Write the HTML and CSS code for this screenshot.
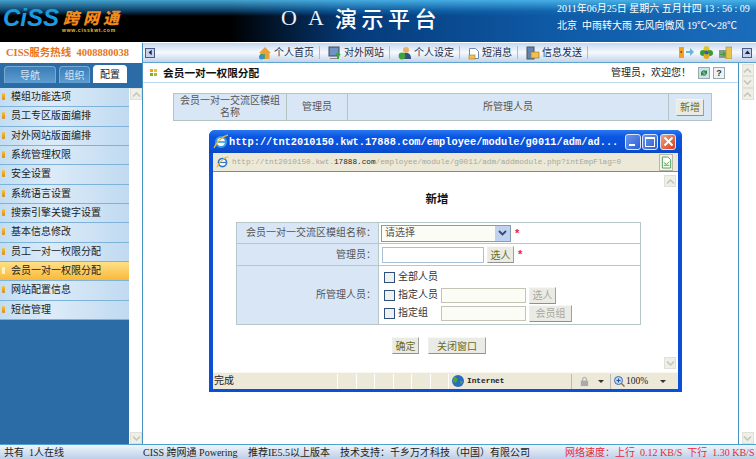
FILE: index.html
```html
<!DOCTYPE html>
<html lang="zh">
<head>
<meta charset="utf-8">
<title>OA 演示平台</title>
<link rel="stylesheet" href="styles.css">
</head>
<body>
<div class="page">
  <header class="top">
    <div class="logo">
      <div class="logo-main"><span class="ciss">CiSS</span><span class="kwt">跨网通</span></div>
      <div class="logo-url">www.cisskwt.com</div>
    </div>
    <div class="oa"><span class="oa-l">O</span><span class="oa-l">A</span><span class="oa-t">演示平台</span></div>
    <div class="info">
      <div>2011年06月25日 星期六 五月廿四 13 : 56 : 09</div>
      <div>北京&nbsp; 中雨转大雨 无风向微风 19℃～28℃</div>
    </div>
  </header>
  <div class="body">
    <aside class="side">
      <div class="hotline">CISS服务热线&nbsp; 4008880038</div>
      <div class="tabs">
        <span class="tab t1">导航</span><span class="tab t2">组织</span><span class="tab on">配置</span>
      </div>
      <div class="side-body">
        <ul class="menu">
          <li>模组功能选项</li>
          <li>员工专区版面编排</li>
          <li>对外网站版面编排</li>
          <li>系统管理权限</li>
          <li>安全设置</li>
          <li>系统语言设置</li>
          <li>搜索引擎关键字设置</li>
          <li>基本信息修改</li>
          <li>员工一对一权限分配</li>
          <li class="active">会员一对一权限分配</li>
          <li>网站配置信息</li>
          <li>短信管理</li>
        </ul>
        <div class="sb side-sb"><span class="sb-btn"><svg viewBox="0 0 9 5" width="9" height="5"><path d="M1 4.500 4.500 1 8 4.500" fill="none" stroke="#c4c4b8" stroke-width="1.500"/></svg></span><span class="sb-btn"><svg viewBox="0 0 9 5" width="9" height="5"><path d="M1 .5 4.500 4 8 .5" fill="none" stroke="#c4c4b8" stroke-width="1.500"/></svg></span></div>
      </div>
    </aside>
    <main class="main">
      <nav class="toolbar">
        <span class="mini"><svg viewBox="0 0 9 9" width="7" height="7"><path d="M6 1 2 4.500 6 8z" fill="#223"/></svg></span>
        <a class="tool first"><svg viewBox="0 0 14 14" width="14" height="14"><path d="M1 7 7 1l6 6-1.500 0v6h-9V7z" fill="#e9a23b"/><path d="M2 13V8h5v5z" fill="#5aa34a"/><circle cx="3.500" cy="11" r="2.500" fill="#3b8ed0"/></svg>个人首页</a>
        <a class="tool"><svg viewBox="0 0 14 14" width="14" height="14"><rect x="1" y="1" width="10" height="9" fill="#6f93c4" stroke="#445"/><path d="M2 12h9v1H2z" fill="#889"/><path d="M10 6l3 3h-2v4H9V9H7z" fill="#3da53a"/></svg>对外网站</a>
        <a class="tool"><svg viewBox="0 0 14 14" width="14" height="14"><circle cx="8" cy="4" r="3" fill="#e8b06a"/><path d="M3 13c0-5 2-6 5-6s5 1 5 6z" fill="#35507f"/><circle cx="4" cy="10" r="3.400" fill="#3da53a"/></svg>个人设定</a>
        <a class="tool"><svg viewBox="0 0 12 14" width="12" height="14"><path d="M1.500 2.500h6l3 3v7h-9z" fill="#fff" stroke="#6b8bb5"/><rect x="1" y="9" width="6" height="4" fill="#f0c050" stroke="#a77b1c" stroke-width=".6"/></svg>短消息</a>
        <a class="tool"><svg viewBox="0 0 14 14" width="14" height="14"><rect x="1" y="1" width="7" height="12" fill="#5f85b8" stroke="#456"/><rect x="5" y="6" width="8" height="6" fill="#f0c050" stroke="#a77b1c" stroke-width=".7"/></svg>信息发送</a>
        <span class="tool-right">
          <svg viewBox="0 0 15 13" width="15" height="13"><rect x="0" y="1" width="5" height="11" fill="#f2a21e"/><rect x="1.500" y="5" width="1.500" height="2" fill="#c22"/><path d="M7 5h4V2l4 4-4 4V7H7z" fill="#67b6d8"/></svg>
          <svg viewBox="0 0 13 13" width="13" height="13"><circle cx="6.500" cy="3" r="3" fill="#e8c31c"/><circle cx="3" cy="7" r="3" fill="#3c9b2f"/><circle cx="10" cy="7" r="3" fill="#3c9b2f"/><circle cx="6.500" cy="10" r="3" fill="#e8a81c"/><circle cx="6.500" cy="6.500" r="2" fill="#2a64b8"/></svg>
          <svg viewBox="0 0 13 13" width="13" height="13"><rect x="7" y="1" width="6" height="12" fill="#e8c54a" stroke="#8a7a30" stroke-width=".5"/><rect x="0" y="4" width="7" height="8" fill="#8a9a8a"/><path d="M1 8h3V5l3 3-3 3V9H1z" fill="#3da53a"/></svg>
          <span class="mini r"><svg viewBox="0 0 9 9" width="7" height="7"><path d="M1 6.500 4.500 2 8 6.500z" fill="#223"/></svg></span>
        </span>
      </nav>
      <div class="content-row">
        <section class="content">
          <div class="title-bar">
            <span class="squares"><i class="s1"></i><i class="s2"></i><i class="s3"></i><i class="s4"></i></span>
            <h1>会员一对一权限分配</h1>
            <span class="welcome">管理员，欢迎您！</span>
            <span class="hbtn green"><svg viewBox="0 0 10 10" width="10" height="10"><path d="M2 5a3 3 0 0 1 5-2l1-1v3.500H4.500L6 4a2 2 0 0 0-3 1zM8 5a3 3 0 0 1-5 2L2 8V4.500h3.500L4 6a2 2 0 0 0 3-1z" fill="#2a8a30"/></svg></span>
            <span class="hbtn">?</span>
          </div>
          <table class="list">
            <tr>
              <td class="c1">会员一对一交流区模组名称</td>
              <td class="c2">管理员</td>
              <td class="c3">所管理人员</td>
              <td class="c4"><button class="btn">新增</button></td>
            </tr>
          </table>
        </section>
        <div class="sb main-sb">
          <span class="sb-btn"><svg viewBox="0 0 9 5" width="9" height="5"><path d="M1 4.500 4.500 1 8 4.500" fill="none" stroke="#c4c4b8" stroke-width="1.500"/></svg></span><span class="sb-btn"><svg viewBox="0 0 9 5" width="9" height="5"><path d="M1 .5 4.500 4 8 .5" fill="none" stroke="#c4c4b8" stroke-width="1.500"/></svg></span><span class="sb-btn"><svg viewBox="0 0 9 5" width="9" height="5"><path d="M1 4.500 4.500 1 8 4.500" fill="none" stroke="#c4c4b8" stroke-width="1.500"/></svg></span>
          <span class="sb-btn end"><svg viewBox="0 0 9 5" width="9" height="5"><path d="M1 .5 4.500 4 8 .5" fill="none" stroke="#c4c4b8" stroke-width="1.500"/></svg></span>
        </div>
      </div>
    </main>
  </div>
  <footer class="foot">
    <span class="f1">共有&nbsp; 1人在线</span>
    <span class="f2">CISS 跨网通 Powering</span>
    <span class="f3">推荐IE5.5以上版本</span>
    <span class="f4">技术支持：千乡万才科技（中国）有限公司</span>
    <span class="f5">网络速度：上行&nbsp; 0.12 KB/S&nbsp; 下行&nbsp; 1.30 KB/S</span>
  </footer>

  <div class="win">
    <div class="win-title">
      <svg class="ie" viewBox="0 0 16 16" width="16" height="16"><circle cx="8" cy="8" r="5" fill="#fff" stroke="#3a9ae0" stroke-width="2.200"/><path d="M3 8h10" stroke="#3a9ae0" stroke-width="1.600"/><path d="M1 14C3 9 9 2 15 1" fill="none" stroke="#f0b428" stroke-width="1.300"/></svg>
      <span class="win-url">http://tnt2010150.kwt.17888.com/employee/module/g0011/adm/ad...</span>
      <span class="wb min"><i></i></span><span class="wb max"><i></i></span><span class="wb close"><svg viewBox="0 0 11 11" width="11" height="11"><path d="M1.500 1.500l8 8M9.500 1.500l-8 8" stroke="#fff" stroke-width="2"/></svg></span>
    </div>
    <div class="addr">
      <span class="addr-box">
        <svg viewBox="0 0 16 16" width="13" height="13"><circle cx="8" cy="8" r="5" fill="#fff" stroke="#2a7ad0" stroke-width="2"/><path d="M3 8h10" stroke="#2a7ad0" stroke-width="1.500"/><path d="M1 14C3 9 9 2 15 1" fill="none" stroke="#f0b428" stroke-width="1.300"/></svg>
        <span class="addr-url">http://tnt2010150.kwt.<b>17888.com</b>/employee/module/g0011/adm/addmodule.php?intEmpFlag=0</span>
      </span>
      <span class="addr-go"><svg viewBox="0 0 12 14" width="11" height="13"><path d="M1.500 1h6l3 3v9h-9z" fill="#fff" stroke="#4a9a50"/><path d="M3 7l3 2 3-3M3 10h6" stroke="#3da53a" fill="none"/></svg></span>
    </div>
    <div class="win-body">
      <form class="form-wrap">
        <h2>新增</h2>
        <table class="form">
          <tr class="r1">
            <th>会员一对一交流区模组名称：</th>
            <td><span class="select"><span>请选择</span><i class="arrow"><svg viewBox="0 0 9 6" width="9" height="6"><path d="M1 1l3.500 3.500L8 1" fill="none" stroke="#2c4a85" stroke-width="1.800"/></svg></i></span><em>*</em></td>
          </tr>
          <tr class="r2">
            <th>管理员：</th>
            <td><span class="input wide"></span><button type="button" class="btn small">选人</button><em>*</em></td>
          </tr>
          <tr class="r3">
            <th>所管理人员：</th>
            <td>
              <div class="opt"><i class="cb"></i><span class="lbl">全部人员</span></div>
              <div class="opt"><i class="cb"></i><span class="lbl">指定人员</span><span class="input"></span><button type="button" class="btn small off">选人</button></div>
              <div class="opt"><i class="cb"></i><span class="lbl">指定组</span><span class="input"></span><button type="button" class="btn off grp">会员组</button></div>
            </td>
          </tr>
        </table>
        <div class="actions"><button type="button" class="btn">确定</button><button type="button" class="btn close-w">关闭窗口</button></div>
      </form>
      <div class="sb win-sb"><span class="sb-btn"><svg viewBox="0 0 9 5" width="9" height="5"><path d="M1 4.500 4.500 1 8 4.500" fill="none" stroke="#c4c4b8" stroke-width="1.500"/></svg></span><span class="sb-btn"><svg viewBox="0 0 9 5" width="9" height="5"><path d="M1 .5 4.500 4 8 .5" fill="none" stroke="#c4c4b8" stroke-width="1.500"/></svg></span></div>
    </div>
    <div class="win-status">
      <span class="st-done">完成</span>
      <span class="cell"></span><span class="cell"></span><span class="cell"></span><span class="cell"></span><span class="cell"></span><span class="cell"></span>
      <span class="st-net"><svg viewBox="0 0 12 12" width="12" height="12"><circle cx="6" cy="6" r="6" fill="#2a6cc0"/><path d="M2 2c3 0 4 2 3 4S2 8 1 6zM8 6l3 0-2 4z" fill="#4aa83a"/></svg>Internet</span>
      <span class="st-lock"><svg viewBox="0 0 12 12" width="11" height="11"><rect x="2" y="5" width="8" height="6" fill="#aaa"/><path d="M4 5V3c0-2 4-2 4 0v2" fill="none" stroke="#999"/></svg><i class="caret"></i></span>
      <span class="st-zoom"><svg viewBox="0 0 11 11" width="11" height="11"><circle cx="4.500" cy="4.500" r="4" fill="#bcd6f2" stroke="#3a6cb0"/><path d="M2.500 4.500h4M4.500 2.500v4" stroke="#2050a0"/><path d="M7.500 7.500l3 3" stroke="#a07030" stroke-width="1.500"/></svg>100%<i class="caret"></i></span>
    </div>
  </div>
</div>
</body>
</html>
```
FILE: styles.css
```css
* { box-sizing: border-box; }
html, body { margin: 0; padding: 0; background: #fff; }
body { font: 10px/1.2 "Liberation Serif", "Noto Sans CJK SC", serif; color: #222; }
.page { position: relative; width: 756px; height: 459px; overflow: hidden; display: flex; flex-direction: column; }

/* header */
.top { height: 42px; flex: none; display: flex; align-items: flex-start; color: #fff;
  background: linear-gradient(180deg, rgba(80,190,240,.85) 0, rgba(20,110,180,.55) 11px, rgba(0,0,0,0) 16px), linear-gradient(90deg, #000 0, #000 230px, #053a78 350px, #0f5ba8 560px, #1a6dbb 756px); }
.logo { width: 281px; flex: none; padding: 9px 0 0 3px; }
.logo-main { display: flex; align-items: flex-start; height: 18px; }
.ciss { font: italic 700 24px/18px "Liberation Sans", sans-serif; color: #1c9be0; width: 60px; flex: none; }
.kwt { font: italic 900 16px/16px "Noto Sans CJK SC", sans-serif; color: #f08a1c; letter-spacing: 4px; white-space: nowrap; }
.logo-url { font: 700 5px/6px "Liberation Sans", sans-serif; color: #e0c030; margin-left: 59px; letter-spacing: .75px; white-space: nowrap; }
.oa { width: 276px; flex: none; display: flex; align-items: center; height: 35px; }
.oa-l { font: 22px/35px "Liberation Serif", serif; width: 27px; color: #e8f2fa; flex: none; }
.oa-t { font: 500 22px/35px "Noto Sans CJK SC", sans-serif; letter-spacing: 4.500px; white-space: nowrap; }
.info { font-size: 10px; line-height: 17px; white-space: nowrap; }

/* layout */
.body { flex: 1; display: flex; border-top: 1px solid #fff; min-height: 0; }
.side { width: 142px; flex: none; display: flex; flex-direction: column; }
.hotline { height: 20px; line-height: 19px; padding-left: 6px; color: #e8741c; font-weight: 700; font-size: 10.500px; white-space: nowrap; }
.tabs { height: 21px; background: #2b6ca6; display: flex; align-items: flex-end; padding: 0 0 1px 4px; flex: none; }
.tab { height: 17px; text-align: center; line-height: 17px; color: #d4e6f5; background: linear-gradient(#3b7db8, #5e9dd0); border: 1px solid #7aaad2; border-bottom: 0; border-radius: 4px 4px 0 0; flex: none; }
.t1 { width: 52px; margin-right: 3px; }
.t2 { width: 31px; margin-right: 3px; }
.tab.on { width: 34px; height: 18px; background: #fff; color: #222; border-color: #fff; }
.side-body { flex: 1; display: flex; background: #2b6ca6; padding-top: 4px; min-height: 0; }
.menu { list-style: none; margin: 0; padding: 0; width: 129px; flex: none; }
.menu li { height: 19.33px; line-height: 18px; padding-left: 11px; color: #222; white-space: nowrap; position: relative;
  background: linear-gradient(90deg, #c2ddf3, #dcebf8 40%, #c0daf0); border-bottom: 1px solid #7fb2d8; }
.menu li::before { content: ""; position: absolute; left: 2px; top: 5px; width: 3px; height: 7px; background: linear-gradient(#f7c53a, #e08a10); border-radius: 1px; }
.menu li.active { background: linear-gradient(#fde08a, #fbb836); }
.menu li.active::before { background: #fff3c0; }

/* scrollbars */
.sb { background: #fff; display: flex; flex-direction: column; align-items: center; flex: none; }
.sb-btn { width: 12px; height: 12px; background: #eef0e8; border: 1px solid #dfe0d8; display: flex; align-items: center; justify-content: center; flex: none; }
.side-sb { width: 13px; padding-left: 1px; justify-content: space-between; }
.main-sb { width: 17px; padding-top: 1px; }
.sb-btn.end { margin-top: auto; }

/* main */
.main { flex: 1; min-width: 0; display: flex; flex-direction: column; border-left: 1px solid #4591c2; }
.toolbar { height: 20px; flex: none; display: flex; align-items: center; padding-left: 2px; white-space: nowrap; border-bottom: 1px solid #5fa3cf;
  background: linear-gradient(#c6d8ef, #f6f9fd 50%, #c2d4ea); color: #1c2c44; }
.mini { width: 10px; height: 10px; border: 1px solid #4a5a8a; background: #c5d3ea; display: flex; align-items: center; justify-content: center; flex: none; }
.tool { display: flex; align-items: center; gap: 2px; padding: 0 5px 0 8px; border-right: 1px solid #a4bfdc; height: 13px; flex: none; }
.tool.first { margin-left: 103px; padding-left: 0; }
.tool svg { flex: none; }
.tool-right { margin-left: auto; display: flex; align-items: center; gap: 6px; padding-right: 4px; }
.mini.r { margin-left: 4px; }
.content-row { flex: 1; display: flex; min-height: 0; }
.content { flex: 1; min-width: 0; border-right: 1px solid #4591c2; }
.title-bar { height: 20px; display: flex; align-items: center; border-bottom: 1px solid #bcdcf0; padding-left: 7px; }
.squares { width: 8px; height: 8px; display: grid; grid-template-columns: 4px 4px; flex: none; }
.squares i { display: block; width: 3px; height: 3px; }
.s1 { background: #f0a020; } .s2 { background: #f0c030; } .s3 { background: #80b020; } .s4 { background: #a0c030; }
h1 { margin: 0 0 0 5px; font: 700 10.700px/18px "Noto Sans CJK SC", sans-serif; color: #111; }
.welcome { margin-left: auto; color: #222; }
.hbtn { width: 12px; height: 12px; border: 1px solid #9aa; background: #eef2f6; font: 700 9px/10px "Liberation Sans", sans-serif; text-align: center; margin-left: 3px; color: #333; flex: none; display: block; }
.hbtn svg { display: block; }
.hbtn.green { margin-left: 7px; background: #cfe0f4; }
.hbtn:last-child { margin-right: 13px; }
.list { border-collapse: collapse; margin: 10px 0 0 30px; width: 539px; height: 28px; background: #d9e6f5; color: #555; }
.list td { border: 1px solid #b3c3c3; text-align: center; padding: 0; line-height: 12px; }
.c1 { width: 113px; } .c2 { width: 61px; } .c3 { width: 321px; }
.list .c1 { padding: 0 3px; }
.btn { font: 10px/14px "Noto Sans CJK SC", sans-serif; color: #6a6a20; height: 17px; padding: 0; background: #ebebe6; border: 1px solid; border-color: #f8f8f4 #a0a0a0 #909090 #f0f0ea; }
.c4 .btn { width: 28px; }

/* footer */
.foot { height: 15px; flex: none; position: relative; display: flex; line-height: 16px; font-size: 10px; white-space: nowrap; border-top: 1px solid #4ba0cf; background: linear-gradient(#f0f5fb, #bccfe8); color: #222; }
.foot span { flex: none; }
.f1 { padding-left: 4px; width: 143px; }
.f2 { width: 105px; }
.f3 { width: 92px; }
.f4 { width: 225px; }
.f5 { color: #e8283a; }

/* popup window */
.win { position: absolute; left: 209px; top: 130px; width: 473px; height: 262px; background: #0a4fd8; border-radius: 6px 6px 0 0; padding: 0 4px 3px; display: flex; flex-direction: column; }
.win-title { height: 23px; flex: none; display: flex; align-items: center; color: #fff; margin: 0 -4px; padding-left: 4px; border-radius: 6px 6px 0 0;
  background: linear-gradient(#2a78f0, #0a55e2 30%, #0a50d8 80%, #0a48c0); }
.ie { flex: none; }
.win-url { font: 700 10.300px/16px "Liberation Mono", monospace; width: 396px; flex: none; white-space: nowrap; }
.wb { width: 16px; height: 16px; border: 1px solid #dfe8fb; border-radius: 3px; background: linear-gradient(135deg, #6a96ee, #2a5fd8); margin-right: 1px; flex: none; position: relative; display: block; }
.wb.min i { position: absolute; left: 3px; bottom: 3px; width: 6px; height: 2px; background: #fff; }
.wb.max i { position: absolute; left: 2px; top: 2px; width: 10px; height: 10px; border: 1px solid #fff; border-top-width: 2px; }
.wb.close { background: linear-gradient(135deg, #f0a080, #d8401c); margin-left: 1px; padding: 1.500px; }
.wb.close svg { display: block; }
.addr { height: 19px; flex: none; display: flex; align-items: center; background: #ece9d8; border-bottom: 1px solid #8a8a80; padding: 0 5px 0 2px; }
.addr-box { flex: 1; min-width: 0; height: 17px; display: flex; align-items: center; gap: 3px; padding-left: 1px; white-space: nowrap; overflow: hidden; }
.addr-url { font: 7.720px/14px "Liberation Mono", monospace; color: #a8a898; }
.addr-url b { font-weight: 400; color: #222; }
.addr-go { width: 14px; height: 17px; border: 1px solid #b8b8a8; background: #f4f4ec; display: flex; align-items: center; justify-content: center; flex: none; }
.win-body { flex: 1; background: #fff; display: flex; min-height: 0; }
.form-wrap { flex: 1; min-width: 0; }
h2 { margin: 17px 0 0; font: 700 11.500px/18px "Noto Sans CJK SC", sans-serif; text-align: center; color: #111; height: 33px; }
.form { border-collapse: collapse; width: 405px; margin-left: 23px; color: #555; }
.form th, .form td { border: 1px solid #b8c8c8; padding: 0; }
.form th { width: 142px; background: #d9e6f5; font-weight: 400; text-align: right; padding-right: 2px; white-space: nowrap; }
.form td { padding-left: 2px; white-space: nowrap; }
.r1 { height: 21px; } .r2 { height: 22px; } .r3 { height: 59px; }
.select { display: inline-flex; width: 130px; height: 17px; border: 1px solid #7f9db9; background: #fbfcf6; align-items: center; justify-content: space-between; padding-left: 3px; vertical-align: middle; }
.arrow { width: 15px; height: 15px; background: #c1d2ee; display: flex; align-items: center; justify-content: center; }
em { font: 700 11px/11px "Liberation Sans", sans-serif; color: #f0203a; margin-left: 4px; vertical-align: middle; }
.input { display: inline-block; width: 85px; height: 15px; border: 1px solid #c4c4b4; background: #fbfcf6; vertical-align: middle; flex: none; }
.input.wide { width: 102px; height: 16px; border-color: #a8c0d8; background: #fff; margin-left: 1px; }
.btn.small { width: 27px; margin-left: 3px; vertical-align: middle; flex: none; }
.btn.off { color: #a8a8a0; }
.btn.grp { width: 43px; margin-left: 3px; flex: none; }
.opt { display: flex; align-items: center; height: 18px; padding-left: 3px; }
.cb { width: 11px; height: 11px; border: 1px solid #30507c; background: #eef1f2; flex: none; margin-right: 3px; }
.lbl { width: 43px; flex: none; color: #333; }
.actions { display: flex; gap: 9px; margin: 12px 0 0 179px; }
.actions .btn { width: 27px; }
.actions .close-w { width: 58px; }
.win-sb { width: 17px; padding: 3px 2px 3px 0; justify-content: space-between; align-items: flex-end; }
.win-status { height: 17px; flex: none; display: flex; align-items: center; background: #ece9d8; font: 10px/16px "Liberation Serif", "Noto Sans CJK SC", serif; color: #222; border-top: 1px solid #f8f8f0; }
.st-done { width: 124px; padding-left: 1px; flex: none; }
.cell { width: 18.500px; height: 15px; border-left: 1px solid #fff; flex: none; }
.st-net { font: 700 7.800px/14px "Liberation Mono", monospace; display: flex; align-items: center; gap: 3px; width: 123px; padding-left: 3px; border-left: 1px solid #fff; height: 15px; flex: none; }
.st-lock { width: 39px; display: flex; align-items: center; gap: 5px; padding-left: 7px; border-left: 1px solid #bbb; height: 15px; flex: none; }
.st-zoom { display: flex; align-items: center; gap: 1px; font: 9.500px/14px "Liberation Serif", serif; padding-left: 3px; border-left: 1px solid #bbb; height: 15px; flex: none; }
.caret { width: 0; height: 0; border: 3px solid transparent; border-top-color: #333; border-bottom: 0; margin-left: 3px; }
.st-zoom .caret { margin-left: 11px; }
```
